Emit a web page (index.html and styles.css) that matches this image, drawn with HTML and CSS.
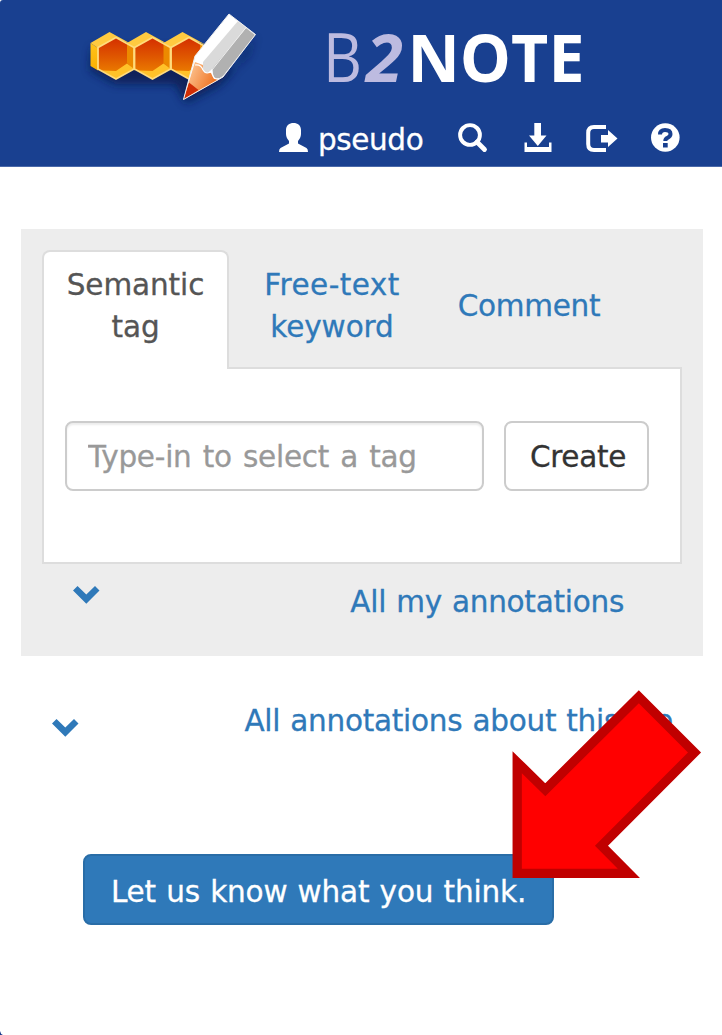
FILE: index.html
```html
<!DOCTYPE html>
<html lang="en">
<head>
<meta charset="utf-8">
<title>B2NOTE</title>
<link rel="stylesheet" href="styles.css">
</head>
<body>
<header class="header">
  <div class="brand">
    <svg class="logo" width="210" height="120" viewBox="0 0 210 120" aria-hidden="true">
      <defs>
        <linearGradient id="cell" x1="0" y1="0" x2="0" y2="1"><stop offset="0" stop-color="#d42e00"/><stop offset=".5" stop-color="#e05a00"/><stop offset="1" stop-color="#f08c00"/></linearGradient>
        <linearGradient id="side" x1="0" y1="0" x2="0" y2="1"><stop offset="0" stop-color="#ffc21c"/><stop offset="1" stop-color="#fbb000"/></linearGradient>
        <linearGradient id="wood" x1="0" y1="0" x2="1" y2=".5"><stop offset="0" stop-color="#ffd9ae"/><stop offset="1" stop-color="#ee6a16"/></linearGradient>
        <filter id="soft" x="-20%" y="-40%" width="140%" height="200%"><feGaussianBlur stdDeviation="5"/></filter>
        <g id="hex">
          <path d="M20.500 43 28 48V70.500L20.500 66z" fill="url(#side)"/>
          <path d="M39.500 32 64 45.500 46 38 28 48 20.500 43z" fill="#ffca40"/>
          <path d="M46 37.500 64 47.500V69L46 79 28 69V47.500z" fill="url(#cell)"/>
          <path d="M57 44 63.500 47.500V69L57 63z" fill="#ec8a00"/>
          <path d="M46 71 57 63.500 63.500 68.500 46 78.500 32 70.500z" fill="#ffc229"/>
          <path d="M46 37.500 64 47.500V69L46 79 28 69V47.500z" fill="none" stroke="#ffdc7c" stroke-width="1.800"/>
        </g>
      </defs>
      <path d="M22 48H130L163 70 185 35 178 55 150 85 116 103 105 84H45L20 70z" fill="#071b51" opacity=".85" filter="url(#soft)"/>
      <use href="#hex" x="73"/><use href="#hex" x="36.500"/><use href="#hex"/>
      <path d="M113.500 99.500 125 56 159 14 185.500 34.500 153 77z" fill="#fff"/>
      <path d="M125 62 133 65 136 72 141 73 144 79 149 79.500 113.500 99.500z" fill="url(#wood)"/>
      <path d="M119 82.500 128.500 90 113.500 99.500z" fill="#d12e05"/>
      <path d="M168 21 176 27.500 142 70Q136 76 133 71V62z" fill="#dadada"/>
      <path d="M176 28 185 35 153 76Q145 82 142 75V69z" fill="#b1b1b1"/>
      <path d="M125 65Q131 64 133 70Q137 76 142 70Q142 80 149 79" fill="none" stroke="#fff" stroke-width="1.200"/>
      <path d="M113.500 99.500 125 56 159 14 185.500 34.500 153 77z" fill="none" stroke="#eee" stroke-width="1"/>
      <path d="M176 27.500 142 70" stroke="#eee" stroke-width="1"/>
    </svg>
    <svg class="wordmark" width="280" height="98" viewBox="0 0 280 98">
      <text class="word-b" x="0" y="81.500" textLength="39" lengthAdjust="spacingAndGlyphs">B</text>
      <text class="word-two" x="43" y="81.500" textLength="37" lengthAdjust="spacingAndGlyphs">2</text>
      <text class="word-note" x="84.500" y="81.500" textLength="177" lengthAdjust="spacingAndGlyphs">NOTE</text>
    </svg>
  </div>
  <nav class="nav">
    <svg width="30" height="30" viewBox="0 0 30 30"><path d="M14.500 0C18.700 0 22 2.500 22 7V11C22 14 20.500 16 19 18V20.500L27.500 25Q29 26 29 29H0Q0 26 1.500 25L10 20.500V18C8.500 16 7 14 7 11V7C7 2.500 10.300 0 14.500 0Z"/></svg>
    <span class="user">pseudo</span>
    <svg class="search" width="30" height="30" viewBox="0 0 30 30"><circle cx="12" cy="12" r="9.900" fill="none" stroke="#fff" stroke-width="3.900"/><path d="m19 19 7.500 7.500" stroke="#fff" stroke-width="4.800" stroke-linecap="round"/></svg>
    <svg class="download" width="28" height="30" viewBox="0 0 28 30"><path d="M10.300 0H17V12.500H22.500L13.800 23 5 12.500H10.300zM.5 19.500H3V24H25V19.500H27.500V29H.5z"/></svg>
    <svg class="logout" width="32" height="30" viewBox="0 0 32 30"><path d="M20 4H8Q2.200 4 2.200 10V21Q2.200 27 8 27H20" fill="none" stroke="#fff" stroke-width="4"/><path d="M15 12H22V7L31.500 15.500 22 24V19.500H15z"/></svg>
    <svg class="help" width="29" height="30" viewBox="0 0 29 30"><circle cx="14.300" cy="14.500" r="14.300"/><path d="M9 11.500Q9 7 14 7Q19.500 7 19.500 11Q19.500 13.500 16.500 14.800Q14.300 15.700 14.300 18" fill="none" stroke="#194090" stroke-width="4"/><path d="M12 20H16.700V24.500H12z" fill="#194090"/></svg>
  </nav>
</header>
<main class="main">
  <section class="panel">
    <div class="tabs">
      <a class="tab active">Semantic<br>tag</a>
      <a class="tab keyword"><span class="wide">Free-text</span><br>keyword</a>
      <a class="tab comment">Comment</a>
    </div>
    <form class="tab-content">
      <input class="field" type="text" placeholder="Type-in to select a tag">
      <button class="create" type="button">Create</button>
    </form>
    <div class="row mine">
      <svg class="chevron" width="27" height="18" viewBox="0 0 27 18"><path d="M4.500 0 13.300 8.500 22 0 26.500 4.500 13.300 17.700 0 4.500z"/></svg>
      <a>All my annotations</a>
    </div>
  </section>
  <div class="row all">
    <svg class="chevron" width="27" height="18" viewBox="0 0 27 18"><path d="M4.500 0 13.300 8.500 22 0 26.500 4.500 13.300 17.700 0 4.500z"/></svg>
    <a>All annotations about this file</a>
  </div>
  <button class="feedback" type="button">Let us know what you think.</button>
</main>
<svg class="arrow" width="200" height="200" viewBox="0 0 200 200" aria-hidden="true"><path d="M7.200 72.200 35.300 99.700 128.800 6.700 184.500 62.500 91.500 155.800 118.800 183.300H7.200z" fill="#f00" stroke="#c00000" stroke-width="9.300" stroke-miterlimit="8"/></svg>
<svg class="corner" width="3" height="4" viewBox="0 0 3 4"><path d="M0 0Q.5 3 3 4H0z" fill="#173a8c"/></svg>
</body>
</html>
```
FILE: styles.css
```css
* { box-sizing: border-box; }
body {
  position: relative;
  width: 722px;
  height: 1035px;
  margin: 0;
  overflow: hidden;
  background: #fff;
  color: #333;
  font: 29.5px/42px "DejaVu Sans", Verdana, sans-serif;
  -webkit-text-stroke: .3px;
}
svg { display: block; flex: none; }
button, input { margin: 0; font: inherit; }

.header {
  height: 167px;
  background: #194090;
  border-bottom: 1px solid #4a69a9;
  border-top-left-radius: 3px;
}
.brand { display: flex; height: 120px; padding-left: 70px; }
.wordmark { margin-left: 43px; overflow: visible; }
.wordmark text { font-family: "Open Sans", sans-serif; font-size: 67px; -webkit-text-stroke: 0; }
.wordmark .word-b { fill: #bdbbe0; font-weight: 400; }
.wordmark .word-two { fill: #bdbbe0; font-weight: 700; font-style: italic; }
.wordmark .word-note { fill: #fff; font-weight: 700; }
.nav { display: flex; padding: 3px 0 0 279px; fill: #fff; color: #fff; }
.user { width: 106px; margin: -4px 0 0 9px; letter-spacing: -.4px; white-space: nowrap; }
.search { margin-left: 34px; }
.download { margin-left: 36px; }
.logout { margin-left: 34px; }
.help { margin-left: 33px; }

.main { display: flex; flex-direction: column; padding: 62px 19px 0 21px; }
.panel { height: 427px; padding: 21px 21px 0; background: #ededed; }
.tabs { display: flex; height: 119px; text-align: center; }
.tab { color: #2f79b9; padding-top: 14px; letter-spacing: -.1px; }
.tab.active {
  z-index: 1;
  width: 187px;
  color: #555;
  background: #fff;
  border: 2px solid #ddd;
  border-bottom: 0;
  border-radius: 8px 8px 0 0;
  padding-top: 12px;
}
.keyword { width: 206px; }
.wide { letter-spacing: .45px; }
.comment { width: 188px; padding-top: 35px; letter-spacing: -.3px; }
.tab-content {
  display: flex;
  gap: 20px;
  height: 197px;
  margin-top: -2px;
  padding: 52px 21px 0;
  background: #fff;
  border: 2px solid #ddd;
}
.field {
  width: 419px;
  height: 70px;
  padding: 2px 21px 0;
  border: 2px solid #ccc;
  border-radius: 8px;
  background: #fff;
  box-shadow: inset 0 2px 2px rgba(0, 0, 0, .075);
  word-spacing: 2px;
  letter-spacing: -.25px;
}
.field::placeholder { color: #999; opacity: 1; }
.create {
  width: 145px;
  height: 70px;
  padding: 2px 0 0 3px;
  border: 2px solid #ccc;
  border-radius: 8px;
  background: #fff;
  color: #333;
  letter-spacing: -.3px;
}
.row { display: flex; justify-content: space-between; color: #2f79b9; fill: #2f79b9; word-spacing: 1px; letter-spacing: -.27px; white-space: nowrap; }
.mine { padding: 17px 58px 0 31px; }
.mine .chevron { margin-top: 5px; }
.all { height: 198px; padding: 44px 30px 0 31px; }
.all .chevron { margin-top: 19px; }
.feedback {
  width: 471px;
  height: 71px;
  margin-left: 62px;
  padding: 4px 0 0;
  border: 2px solid #296da7;
  border-radius: 8px;
  background: #2f79b9;
  color: #fff;
  word-spacing: 1px;
  letter-spacing: -.17px;
  white-space: nowrap;
}
.arrow { position: absolute; left: 510px; top: 690px; }
.corner { position: absolute; left: 0; bottom: 0; }
```
